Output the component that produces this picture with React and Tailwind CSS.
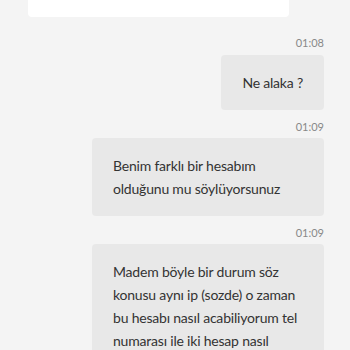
import React from 'react';

const Stamp = ({ time }) => (
  <div className="text-right text-[11px] leading-4 text-[#888888]">{time}</div>
);

const Bubble = ({ lines, wide }) => (
  <div className="flex justify-end">
    <div
      className={`rounded-[4px] bg-[#e8e8e8] px-[21px] py-4 text-[14px] leading-[23px] tracking-[-0.2px] text-[#333333] ${
        wide ? 'w-[232px]' : ''
      }`}
    >
      {lines.map((l, i) => (
        <div key={i} className="whitespace-nowrap">{l}</div>
      ))}
    </div>
  </div>
);

export default function App() {
  return (
    <div
      className="h-[350px] w-[350px] overflow-hidden bg-[#f4f4f4]"
      style={{ fontFamily: '"Source Sans Pro", Lato, "Noto Sans", sans-serif' }}
    >
      <div className="ml-[28px] h-[17px] w-[261px] rounded-b-[4px] bg-white" />

      <div className="pl-[26px] pr-[26px] pt-[18px]">
        <Stamp time="01:08" />
        <div className="mt-[4px]">
          <Bubble lines={['Ne alaka ?']} />
        </div>

        <div className="mt-[9px]">
          <Stamp time="01:09" />
        </div>
        <div className="mt-[3px]">
          <Bubble wide lines={['Benim farklı bir hesabım', 'olduğunu mu söylüyorsunuz']} />
        </div>

        <div className="mt-[9px]">
          <Stamp time="01:09" />
        </div>
        <div className="mt-[3px]">
          <Bubble
            wide
            lines={[
              'Madem böyle bir durum söz',
              'konusu aynı ip (sozde) o zaman',
              'bu hesabı nasıl acabiliyorum tel',
              'numarası ile iki hesap nasıl',
              'olur',
            ]}
          />
        </div>
      </div>
    </div>
  );
}
